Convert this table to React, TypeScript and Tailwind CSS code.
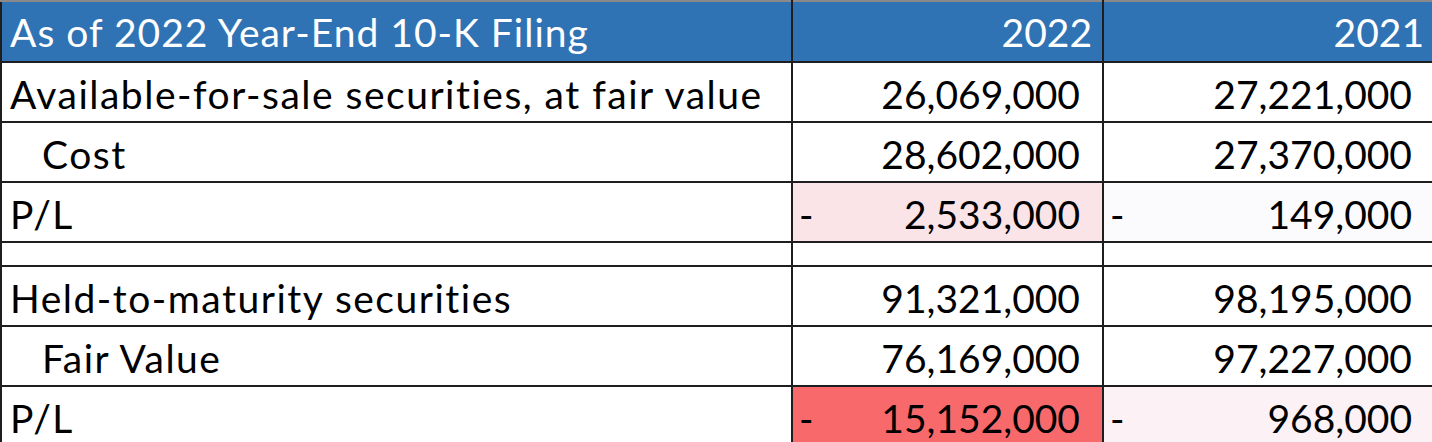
const rows: { label: string; indent?: boolean; v2022: string; v2021: string; pl?: boolean; c2022?: string; c2021?: string; spacer?: boolean }[] = [
  { label: "Available-for-sale securities, at fair value", v2022: "26,069,000", v2021: "27,221,000" },
  { label: "Cost", indent: true, v2022: "28,602,000", v2021: "27,370,000" },
  { label: "P/L", v2022: "2,533,000", v2021: "149,000", pl: true, c2022: "bg-[#fbe4e7]", c2021: "bg-[#fbfbfe]" },
  { label: "", v2022: "", v2021: "", spacer: true },
  { label: "Held-to-maturity securities", v2022: "91,321,000", v2021: "98,195,000" },
  { label: "Fair Value", indent: true, v2022: "76,169,000", v2021: "97,227,000" },
  { label: "P/L", v2022: "15,152,000", v2021: "968,000", pl: true, c2022: "bg-[#f8696b]", c2021: "bg-[#fcf1f4]" },
];

const Num = ({ value, pl }: { value: string; pl?: boolean }) => (
  <div className="flex items-center justify-between pl-[6px] pr-[22px]">
    <span className="inline-block w-[14px]">{pl ? "-" : ""}</span>
    <span>{value}</span>
  </div>
);

export default function App() {
  return (
    <div
      className="w-[1432px] h-[442px] overflow-hidden bg-white text-black [font-variant-ligatures:none]"
      style={{ fontFamily: "Lato, 'Open Sans', sans-serif" }}
    >
      <table className="table-fixed border-collapse w-[1434px] text-[39px] leading-none">
        <colgroup>
          <col className="w-[791px]" />
          <col className="w-[311px]" />
          <col className="w-[332px]" />
        </colgroup>
        <thead>
          <tr className="h-[61px] bg-[#2f73b5] text-white">
            <th className="border-2 border-[#1e1e1e] border-t-[#8a8a8a] font-normal text-left pl-[8px] pt-[2px] tracking-[1px]">
              As of 2022 Year-End 10-K Filing
            </th>
            <th className="border-2 border-[#1e1e1e] border-t-[#8a8a8a] font-normal text-right pr-[10px] pt-[2px]">2022</th>
            <th className="border-2 border-[#1e1e1e] border-t-[#8a8a8a] font-normal text-right pr-[10px] pt-[2px]">2021</th>
          </tr>
        </thead>
        <tbody>
          {rows.map((r, i) =>
            r.spacer ? (
              <tr key={i} className="h-[24px]">
                <td className="border-2 border-[#1e1e1e]" />
                <td className="border-2 border-[#1e1e1e]" />
                <td className="border-2 border-[#1e1e1e]" />
              </tr>
            ) : (
              <tr key={i} className="h-[60px]">
                <td className={`border-2 border-[#1e1e1e] pt-[4px] tracking-[1.5px] ${r.indent ? "pl-[40px]" : "pl-[8px]"}`}>{r.label}</td>
                <td className={`border-2 border-[#1e1e1e] p-0 pt-[4px] ${r.c2022 ?? ""}`}>
                  <Num value={r.v2022} pl={r.pl} />
                </td>
                <td className={`border-2 border-[#1e1e1e] p-0 pt-[4px] ${r.c2021 ?? ""}`}>
                  <Num value={r.v2021} pl={r.pl} />
                </td>
              </tr>
            )
          )}
        </tbody>
      </table>
    </div>
  );
}
